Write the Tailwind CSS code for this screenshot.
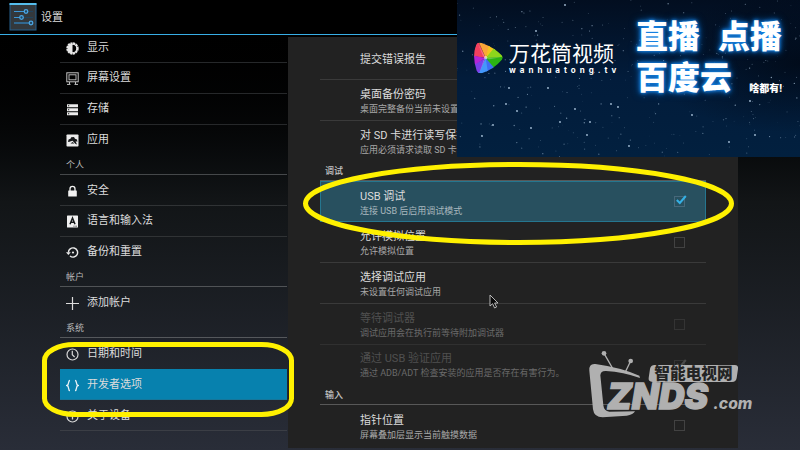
<!DOCTYPE html>
<html lang="zh-CN">
  <head>
    <meta charset="UTF-8" />
    <meta name="viewport" content="width=device-width, initial-scale=1.0" />
    <title>设置</title>
    <script src="https://cdn.jsdelivr.net/npm/@tailwindcss/browser@4"></script>
  </head>
  <body class="font-[Roboto,'Noto_Sans_CJK_SC',sans-serif] bg-black text-[#dcdcdc]">
    <div class="relative h-screen overflow-hidden flex flex-col bg-linear-to-b from-black via-[#121517] via-45% to-[#292d38]">
      <!-- Header -->
      <header class="h-[35px] shrink-0 flex items-center gap-1 pl-[9px] bg-black border-b border-[#38aee6]">
        <svg class="size-7" viewBox="0 0 28 28" fill="none">
          <rect x="1" y="1" width="26" height="26" fill="#33383c" stroke="#245f8c" />
          <rect x="0.5" y="0" width="27" height="2" fill="#55bdec" />
          <path d="M5 8.500h19M5 14.500h19M5 20h19" stroke="#20435d" stroke-width="1.200" />
          <path d="M5 8.500h11M5 14.500h6M5 20h15" stroke="#3c96d6" stroke-width="1.200" />
          <circle cx="17" cy="8.500" r="1.800" fill="#23455f" stroke="#4aa5e2" stroke-width="1.300" />
          <circle cx="12.500" cy="14.500" r="1.800" fill="#23455f" stroke="#4aa5e2" stroke-width="1.300" />
          <circle cx="22" cy="20" r="1.800" fill="#23455f" stroke="#4aa5e2" stroke-width="1.300" />
        </svg>
        <h1 class="pt-[2px] text-[11px]">设置</h1>
      </header>

      <div class="flex flex-1 min-h-0">
        <!-- Category list -->
        <nav class="w-[36%] shrink-0 pl-[60px] pr-px overflow-hidden text-[11px]">
          <div class="-mt-[3px]">
            <a href="#display" class="flex items-center gap-2 h-[31px] pl-[6px] pt-[2px] border-b border-[#26282a]">
              <svg class="size-[13px]" viewBox="0 0 13 13">
                <circle cx="6.500" cy="6.500" r="5.300" fill="none" stroke="#e8e8e8" stroke-width="1.800" stroke-dasharray="2.200 0.570" />
                <circle cx="6.500" cy="6.500" r="4.300" fill="none" stroke="#e8e8e8" stroke-width="1.200" />
                <path d="M6.500 2a4.500 4.500 0 0 0 0 9z" fill="#e8e8e8" />
              </svg>
              显示
            </a>
            <a href="#screen" class="flex items-center gap-2 h-[31px] pl-[6px] border-b border-[#26282a]">
              <svg class="size-[13px]" viewBox="0 0 13 13" fill="none" stroke="#c4c4c4">
                <rect x="0.800" y="0.800" width="11.400" height="9" />
                <rect x="3" y="2.800" width="7" height="5" stroke-width="0.900" />
                <path d="M3.500 10v2M9.500 10v2M1 12.400h3.500M8.500 12.400H12" />
              </svg>
              屏幕设置
            </a>
            <a href="#storage" class="flex items-center gap-2 h-[31px] pl-[6px] border-b border-[#26282a]">
              <svg class="size-[13px]" viewBox="0 0 13 13">
                <path d="M1 1.200h11v3H1zM1 5.200h11v3H1zM1 9.200h11v3H1z" fill="#ececec" />
                <path d="M2 2.200h1.200v1H2zM2 6.200h1.200v1H2zM2 10.200h1.200v1H2z" fill="#111" />
              </svg>
              存储
            </a>
            <a href="#apps" class="flex items-center gap-2 h-[31px] pl-[6px]">
              <svg class="size-[13px]" viewBox="0 0 13 13">
                <rect x="0.500" y="0.500" width="12" height="12" rx="0.800" fill="#ececec" />
                <path d="M2 7.800L2.600 5.500 4.500 4.800 5.200 3.200 8 3 9 4.800l2 .8.400 2.200-1.800-.600 1.400 3.300z" fill="#16181a" />
                <path d="M1.800 11.500L3.300 7.800 6.500 6.800 11 11.500z" fill="#ececec" />
                <path d="M4.500 9.500l2-1.500 2 1.500z" fill="#16181a" />
              </svg>
              应用
            </a>
            <h2 class="flex items-center h-[19px] pl-[6px] pt-[2px] text-[9px] text-[#b9b9b9] border-b border-[#45484a]">个人</h2>
            <a href="#security" class="flex items-center gap-2 h-[31px] pl-[6px] pt-[2px] border-b border-[#303335]">
              <svg class="size-[13px]" viewBox="0 0 13 13">
                <rect x="2.200" y="5.500" width="8.600" height="6" rx="0.500" fill="#f2f2f2" />
                <path d="M4 6V3.800a2.500 2.500 0 0 1 5 0V6" fill="none" stroke="#f2f2f2" stroke-width="1.300" />
              </svg>
              安全
            </a>
            <a href="#language" class="flex items-center gap-2 h-[31px] pl-[6px] border-b border-[#303335]">
              <svg class="size-[13px]" viewBox="0 0 13 13">
                <rect x="1" y="0.500" width="11" height="12" rx="0.600" fill="#f0f0f0" />
                <path d="M4 9.300L6.500 3 9 9.300M5 7.300h3" fill="none" stroke="#15181a" stroke-width="1.500" />
                <path d="M7.500 11.200h3.500" stroke="#15181a" stroke-width="0.800" stroke-dasharray="0.800 0.500" />
              </svg>
              语言和输入法
            </a>
            <a href="#backup" class="flex items-center gap-2 h-[31px] pl-[6px]">
              <svg class="size-[13px]" viewBox="0 0 13 13">
                <path d="M2.400 6.500A4.600 4.600 0 1 1 4 10" fill="none" stroke="#e8e8e8" stroke-width="1.400" />
                <path d="M0 6.200h4.800L2.400 9z" fill="#e8e8e8" />
                <circle cx="7" cy="6.500" r="1.100" fill="#e8e8e8" />
              </svg>
              备份和重置
            </a>
            <h2 class="flex items-center h-[19px] pl-[6px] pt-[2px] text-[9px] text-[#b9b9b9] border-b border-[#505356]">帐户</h2>
            <a href="#add-account" class="flex items-center gap-2 h-[31px] pl-[6px] pt-[2px]">
              <svg class="size-[13px]" viewBox="0 0 13 13">
                <path d="M6.500 0v13M0 6.500h13" stroke="#dcdcdc" stroke-width="1.200" />
              </svg>
              添加帐户
            </a>
            <h2 class="flex items-center h-5 pl-[6px] pt-[2px] text-[9px] text-[#b9b9b9] border-b border-[#55585c]">系统</h2>
            <a href="#date" class="flex items-center gap-2 h-[31px] pl-[6px] pt-[2px]">
              <svg class="size-[13px]" viewBox="0 0 13 13" fill="none" stroke="#d8d8d8">
                <circle cx="6.500" cy="6.500" r="5.500" stroke-width="1.200" />
                <path d="M6.300 2.800v4L8.600 9" stroke-width="1.200" />
              </svg>
              日期和时间
            </a>
            <a href="#developer" aria-current="page" class="flex items-center gap-2 h-[31px] pl-[6px] pt-[2px] bg-[#0781ae] border-b border-[#16769a]">
              <svg class="size-[13px]" viewBox="0 0 13 13" fill="none" stroke="#e4f0f5" stroke-width="1.300">
                <path d="M4 1.500C1.500 1.300 3.700 5.800 1 6.500c2.700.7.500 5.200 3 5" />
                <path d="M9 1.500c2.500-.2.300 4.300 3 5-2.700.7-.5 5.200-3 5" />
              </svg>
              开发者选项
            </a>
            <a href="#about" class="flex items-center gap-2 h-[31px] pl-[6px] pt-[2px] border-b border-[#3b3e45]">
              <svg class="size-[13px]" viewBox="0 0 13 13" fill="none" stroke="#d8d8d8">
                <circle cx="6.500" cy="6.500" r="5.500" stroke-width="1.200" />
                <path d="M6.500 5.500v4M6.500 3.300v1.200" stroke-width="1.300" />
              </svg>
              关于设备
            </a>
          </div>
        </nav>

        <!-- Developer options -->
        <main class="flex-1 mt-[2px] mb-[2px] mr-[62px] px-8 bg-[#222222] overflow-hidden text-[11px] leading-[14px]">
          <button type="button" class="flex items-center w-full h-[43px] pl-10 pt-[3px] border-b border-[#3a3a3a] text-left">提交错误报告</button>
          <button type="button" class="block w-full h-[41px] pl-10 pt-[3px] border-b border-[#3a3a3a] text-left">
            <span class="block">桌面备份密码</span>
            <span class="block text-[9px] text-[#a8a8a8]">桌面完整备份当前未设置密码保护</span>
          </button>
          <button type="button" class="block w-full h-[41px] pl-10 pt-[2px] text-left">
            <span class="block">对 SD 卡进行读写保护</span>
            <span class="block text-[9px] text-[#a8a8a8]">应用必须请求读取 SD 卡的权限</span>
          </button>

          <h2 class="flex items-center h-[19px] pl-[5px] text-[9px] font-medium text-[#c4c4c4] border-b border-[#585858]">调试</h2>
          <label class="flex items-center h-[41px] pl-[39px] pr-5 bg-[#28505f] border border-[#25768f]">
            <span class="flex-1 pt-[4px]">
              <span class="block">USB 调试</span>
              <span class="block text-[9px] text-[#a9b8be]">连接 USB 后启用调试模式</span>
            </span>
            <span class="relative size-[11px]">
              <input type="checkbox" checked class="block appearance-none size-[11px] border border-[#47687a]" />
              <svg class="absolute left-[2px] -top-px w-[11px] h-[10px]" viewBox="0 0 11 10" fill="none">
                <path d="M0.800 5l3 3L9.800 1" stroke="#35b0e4" stroke-width="2" />
              </svg>
            </span>
          </label>
          <label class="flex items-center h-[41px] pl-10 pr-[21px] border-b border-[#3a3a3a]">
            <span class="flex-1 pt-[4px]">
              <span class="block">允许模拟位置</span>
              <span class="block text-[9px] text-[#a8a8a8]">允许模拟位置</span>
            </span>
            <input type="checkbox" class="appearance-none size-[11px] border border-[#424242]" />
          </label>
          <button type="button" class="block w-full h-[41px] pl-10 pt-[4px] border-b border-[#3a3a3a] text-left">
            <span class="block">选择调试应用</span>
            <span class="block text-[9px] text-[#a8a8a8]">未设置任何调试应用</span>
          </button>
          <label class="flex items-center h-[41px] pl-10 pr-[21px] border-b border-[#303030]">
            <span class="flex-1 pt-[3px]">
              <span class="block text-[#505050]">等待调试器</span>
              <span class="block text-[9px] text-[#6a6a6a]">调试应用会在执行前等待附加调试器</span>
            </span>
            <input type="checkbox" disabled class="appearance-none size-[11px] border border-[#343434]" />
          </label>
          <label class="flex items-center h-[41px] pl-10 pr-[21px]">
            <span class="flex-1">
              <span class="block text-[#505050]">通过 USB 验证应用</span>
              <span class="block text-[9px] text-[#6a6a6a]">通过 ADB/ADT 检查安装的应用是否存在有害行为。</span>
            </span>
            <span class="relative size-[11px]">
              <input type="checkbox" checked disabled class="block appearance-none size-[11px] border border-[#343434]" />
              <svg class="absolute left-[2px] -top-px w-[11px] h-[10px]" viewBox="0 0 11 10" fill="none">
                <path d="M0.800 5l3 3L9.800 1" stroke="#4a4a4a" stroke-width="2" />
              </svg>
            </span>
          </label>

          <h2 class="flex items-center h-[19px] pl-[5px] text-[9px] font-medium text-[#c4c4c4] border-b border-[#585858]">输入</h2>
          <label class="flex items-center h-[41px] pl-10 pr-[21px]">
            <span class="flex-1 pt-[4px]">
              <span class="block">指针位置</span>
              <span class="block text-[9px] text-[#a8a8a8]">屏幕叠加层显示当前触摸数据</span>
            </span>
            <input type="checkbox" class="appearance-none size-[11px] border border-[#424242]" />
          </label>
        </main>
      </div>

      <!-- Promo banner -->
      <div class="absolute top-0 right-0 w-[343px] h-[157px] overflow-hidden bg-linear-to-b from-[#020e20] via-[#021c3b] to-[#02203f] text-white">
        <svg id="stars" class="absolute inset-0 w-full h-full" viewBox="0 0 343 157">
          <defs>
            <radialGradient id="dark" cx="1" cy="0.400" r="0.450">
              <stop offset="0" stop-color="#010814" stop-opacity="0.800" />
              <stop offset="1" stop-color="#010814" stop-opacity="0" />
            </radialGradient>
          </defs>
          <rect width="343" height="157" fill="url(#dark)" />
        </svg>
        <div class="relative flex justify-between pl-4 pr-[18px]">
          <div class="flex items-start gap-[6px] pt-[42px]">
            <svg class="w-[30px] h-8" viewBox="0 0 90 96">
              <defs>
                <clipPath id="gem"><path d="M14 3Q22 0 32 5Q66 18 86 40Q92 47 86 54Q62 82 28 93Q15 96 11 86Q-3 46 8 12Q10 5 14 3z" /></clipPath>
              </defs>
              <g clip-path="url(#gem)">
                <path d="M38 48L-5 42L15-5z" fill="#f2405e" />
                <path d="M38 48L15-5L55 5z" fill="#fba638" />
                <path d="M38 48L50 0L72 20z" fill="#f3c51f" />
                <path d="M38 48L66 15L95 47z" fill="#8ed61c" />
                <path d="M38 48L95 45L60 88z" fill="#2bb312" />
                <path d="M38 48L66 80L40 100z" fill="#3f6df3" />
                <path d="M38 48L46 98L12 98z" fill="#4398fb" />
                <path d="M38 48L16 98L-5 70z" fill="#7b3fe8" />
                <path d="M38 48L-5 74L-5 40z" fill="#b426d6" />
                <path d="M38 48L15 5L30 42zM38 48L84 46L50 52zM38 48L20 90L32 54z" fill="#fff" fill-opacity="0.250" />
                <circle cx="38" cy="47" r="5" fill="#fff" fill-opacity="0.600" />
              </g>
            </svg>
            <div>
              <p class="text-[21px] leading-6">万花筒视频</p>
              <p class="font-[Inter,sans-serif] text-[8px] leading-2 font-bold tracking-[4px]">wanhuatong.tv</p>
            </div>
          </div>
          <div class="w-[146px] shrink-0 pt-[17px] text-[32px] leading-[41px] font-black [text-shadow:0_0_3px_#1684e6,0_0_5px_#1684e6,0_0_8px_#0c63bd]">
            <p class="flex justify-between"><span>直播</span><span>点播</span></p>
            <p class="flex justify-between items-end">
              <span>百度云</span>
              <span class="pb-[2px] text-[10px] leading-4 [text-shadow:none]">啥都有!</span>
            </p>
          </div>
        </div>
      </div>

      <!-- Site watermark -->
      <svg class="absolute left-[588px] top-[350px] w-[168px] h-[69px]" viewBox="84 90 504 207">
        <g fill="#b0b0b0">
          <path d="M88 152Q86 130 106 132Q180 142 238 167L240 174Q190 156 138 153Q122 152 121 166L130 256Q132 274 148 275L225 274Q220 284 200 287L128 292Q102 292 99 268z" />
          <circle cx="132" cy="100" r="7" />
          <circle cx="212" cy="123" r="7" />
          <path d="M132 100L159 147M212 123L196 156" stroke="#b0b0b0" stroke-width="4" />
          <text x="142" y="268" font-family="Inter" font-size="106" font-weight="900" font-style="italic" stroke="#b0b0b0" stroke-width="4">ZNDS</text>
          <text x="460" y="267" font-family="Inter" font-size="47" font-weight="800" font-style="italic">.com</text>
          <path d="M284 135H524Q536 135 534 147L530 174Q528 186 516 186H292L278 196V186Q264 184 266 174L270 147Q272 135 284 135z" />
        </g>
        <text x="283" y="176" font-family="Noto Sans CJK SC" font-size="47" font-weight="900" fill="#242424">智能电视网</text>
      </svg>

      <!-- Highlight rings -->
      <svg class="absolute inset-0 w-full h-full pointer-events-none" fill="none" stroke="#fff100" stroke-width="5">
        <ellipse cx="518.500" cy="203.500" rx="213" ry="39" />
        <rect x="44.500" y="344.500" width="247" height="70" rx="30" ry="16" />
      </svg>

      <!-- Pointer -->
      <svg class="absolute left-[489px] top-[294px] w-[10px] h-[15px]" viewBox="0 0 10 15">
        <path d="M1 1v11l2.600-2.300L5.600 14l2-1-2-4H9z" fill="#0a0a0a" stroke="#c8c8c8" stroke-width="0.900" />
      </svg>
    </div>

    <script>
      // scatter the banner stars, same layout on every load
      const sky = document.getElementById('stars');
      let seed = 11;
      const rand = () => (seed = (seed * 16807) % 2147483647) / 2147483647;
      const star = (x, y, r, o) => {
        const c = document.createElementNS('http://www.w3.org/2000/svg', 'circle');
        c.setAttribute('cx', x);
        c.setAttribute('cy', y);
        c.setAttribute('r', r);
        c.setAttribute('fill', '#b9d3ea');
        c.setAttribute('fill-opacity', o);
        sky.appendChild(c);
      };
      for (let i = 0; i < 320; i++) {
        star(rand() * 343, rand() * 157, 0.3 + rand() * 0.4, 0.2 + rand() * 0.5);
      }
      // brighter ones
      [[108, 5], [91, 88], [103, 122], [133, 122], [154, 104], [161, 107], [25, 136], [36, 125], [52, 88],
       [172, 146], [235, 115], [293, 101], [192, 84], [118, 109], [49, 104], [74, 128], [130, 135], [298, 135],
       [79, 31], [60, 111], [272, 142], [205, 37]].forEach(([x, y]) => star(x, y, 0.9, 0.9));
    </script>
  </body>
</html>
